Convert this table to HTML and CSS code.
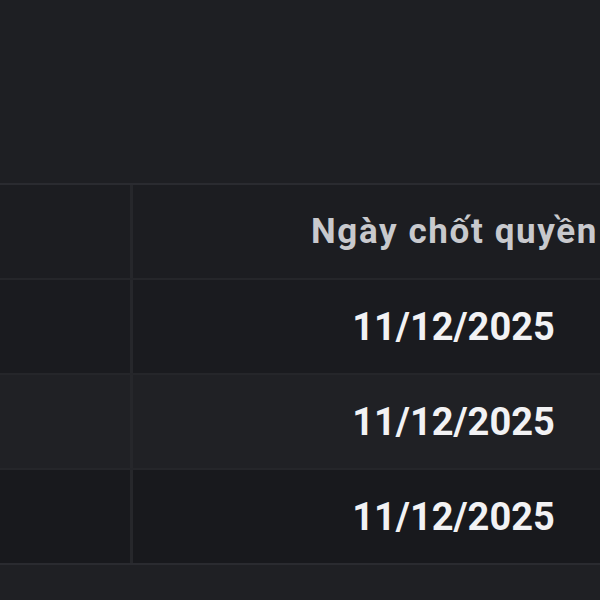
FILE: index.html
```html
<!DOCTYPE html>
<html lang="vi">
<head>
<meta charset="utf-8">
<link rel="stylesheet" href="styles.css">
</head>
<body>
<div class="top"></div>
<div class="table">
  <div class="row head">
    <div class="cell first"></div>
    <div class="cell main">Ngày chốt quyền</div>
  </div>
  <div class="row odd">
    <div class="cell first"></div>
    <div class="cell main date">11/12/2025</div>
  </div>
  <div class="row even">
    <div class="cell first"></div>
    <div class="cell main date">11/12/2025</div>
  </div>
  <div class="row odd dark">
    <div class="cell first"></div>
    <div class="cell main date">11/12/2025</div>
  </div>
</div>
</body>
</html>
```
FILE: styles.css
```css
html, body {
  margin: 0;
  padding: 0;
  background: #1f2024;
  overflow: hidden;
  width: 600px;
  height: 600px;
}
body {
  font-family: Roboto, "Noto Sans", sans-serif;
}
.top {
  height: 183px;
  background: #1e1f23;
}
.table {
  width: 780px;
  border-top: 2px solid #2a2b30;
  border-bottom: 2px solid #2a2b30;
}
.row {
  display: grid;
  grid-template-columns: 133px 643px;
  height: 93px;
}
.row + .row {
  border-top: 2px solid #25262a;
}
.head { background: #1c1d21; }
.odd { background: #1a1b1f; }
.even { background: #202125; }
.dark { background: #18191d; }
.cell {
  display: flex;
  align-items: center;
  justify-content: center;
}
.first {
  border-right: 3px solid #26272b;
}
.main {
  color: #c8c9cd;
  font-size: 35px;
  font-weight: 700;
  letter-spacing: 1.6px;
  white-space: nowrap;
}
.date {
  color: #f2f2f4;
  font-size: 38px;
  font-weight: 700;
  letter-spacing: 0;
  padding-right: 2px;
}
```
